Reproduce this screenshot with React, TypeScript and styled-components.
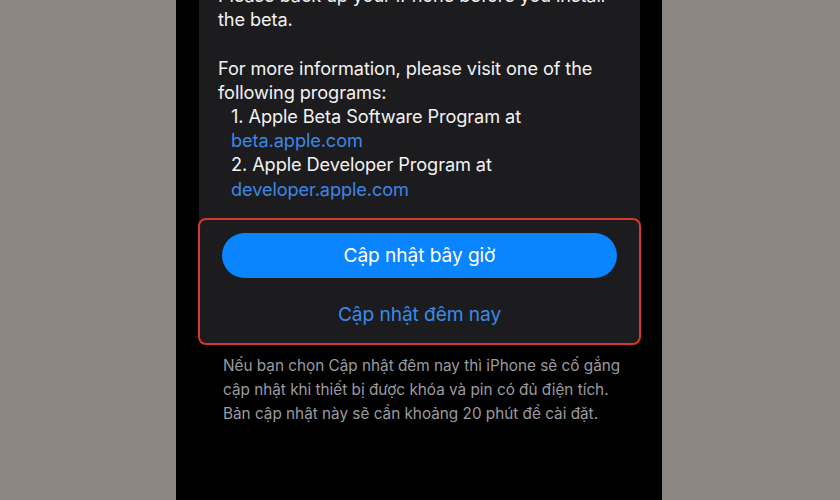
import React from 'react';
import styled, { createGlobalStyle } from 'styled-components';

const GlobalStyle = createGlobalStyle`
  html, body {
    margin: 0;
    padding: 0;
    background: #8b8682;
    overflow: hidden;
  }
  body {
    font-family: Inter, "Noto Sans", "Liberation Sans", sans-serif;
  }
`;

const Page = styled.div`
  width: 840px;
  height: 500px;
  display: flex;
  justify-content: center;
  background: #8b8682;
  overflow: hidden;
`;

const Screen = styled.div`
  width: 486px;
  height: 500px;
  margin-left: -2px;
  background: #000;
  padding: 0 22px 0 23px;
  box-sizing: border-box;
  display: flex;
  flex-direction: column;
`;

const Card = styled.div`
  background: #1c1c1e;
  border-radius: 0 0 10px 10px;
  margin-top: -17px;
  display: flex;
  flex-direction: column;
`;

const Body = styled.div`
  padding: 0 19px;
  color: #f2f2f2;
  font-size: 18.2px;
  line-height: 24.2px;
  letter-spacing: -0.1px;
`;

const Line = styled.div<{ indent?: boolean }>`
  padding-left: ${(p) => (p.indent ? '13px' : '0')};
  white-space: nowrap;
`;

const Blank = styled.div`
  height: 24.2px;
`;

const Link = styled.span`
  color: #3c87e6;
`;

const Actions = styled.div`
  margin-top: 17px;
  margin-left: -1px;
  margin-right: -1px;
  border: 2px solid #d8382a;
  border-radius: 8px;
  padding: 13px 22px 7px;
  display: flex;
  flex-direction: column;
  gap: 14px;
`;

const PrimaryButton = styled.button`
  height: 45px;
  border: none;
  border-radius: 23px;
  background: #0a84ff;
  color: #fff;
  font-family: inherit;
  font-size: 19.2px;
  letter-spacing: -0.1px;
`;

const TextButton = styled.button`
  height: 44px;
  border: none;
  background: transparent;
  color: #3b8ae8;
  font-family: inherit;
  font-size: 19.2px;
  letter-spacing: -0.1px;
`;

const Footnote = styled.div`
  margin-top: 9px;
  padding-left: 24px;
  color: #9b9ba0;
  font-size: 15.3px;
  line-height: 24px;
  white-space: nowrap;
`;

export default function App() {
  return (
    <>
      <GlobalStyle />
      <Page>
        <Screen>
          <Card>
            <Body>
              <Line>Please back up your iPhone before you install</Line>
              <Line>the beta.</Line>
              <Blank />
              <Line>For more information, please visit one of the</Line>
              <Line>following programs:</Line>
              <Line indent>1. Apple Beta Software Program at</Line>
              <Line indent>
                <Link>beta.apple.com</Link>
              </Line>
              <Line indent>2. Apple Developer Program at</Line>
              <Line indent>
                <Link>developer.apple.com</Link>
              </Line>
            </Body>
            <Actions>
              <PrimaryButton>Cập nhật bây giờ</PrimaryButton>
              <TextButton>Cập nhật đêm nay</TextButton>
            </Actions>
          </Card>
          <Footnote>
            Nếu bạn chọn Cập nhật đêm nay thì iPhone sẽ cố gắng
            <br />
            cập nhật khi thiết bị được khóa và pin có đủ điện tích.
            <br />
            Bản cập nhật này sẽ cần khoảng 20 phút để cài đặt.
          </Footnote>
        </Screen>
      </Page>
    </>
  );
}
